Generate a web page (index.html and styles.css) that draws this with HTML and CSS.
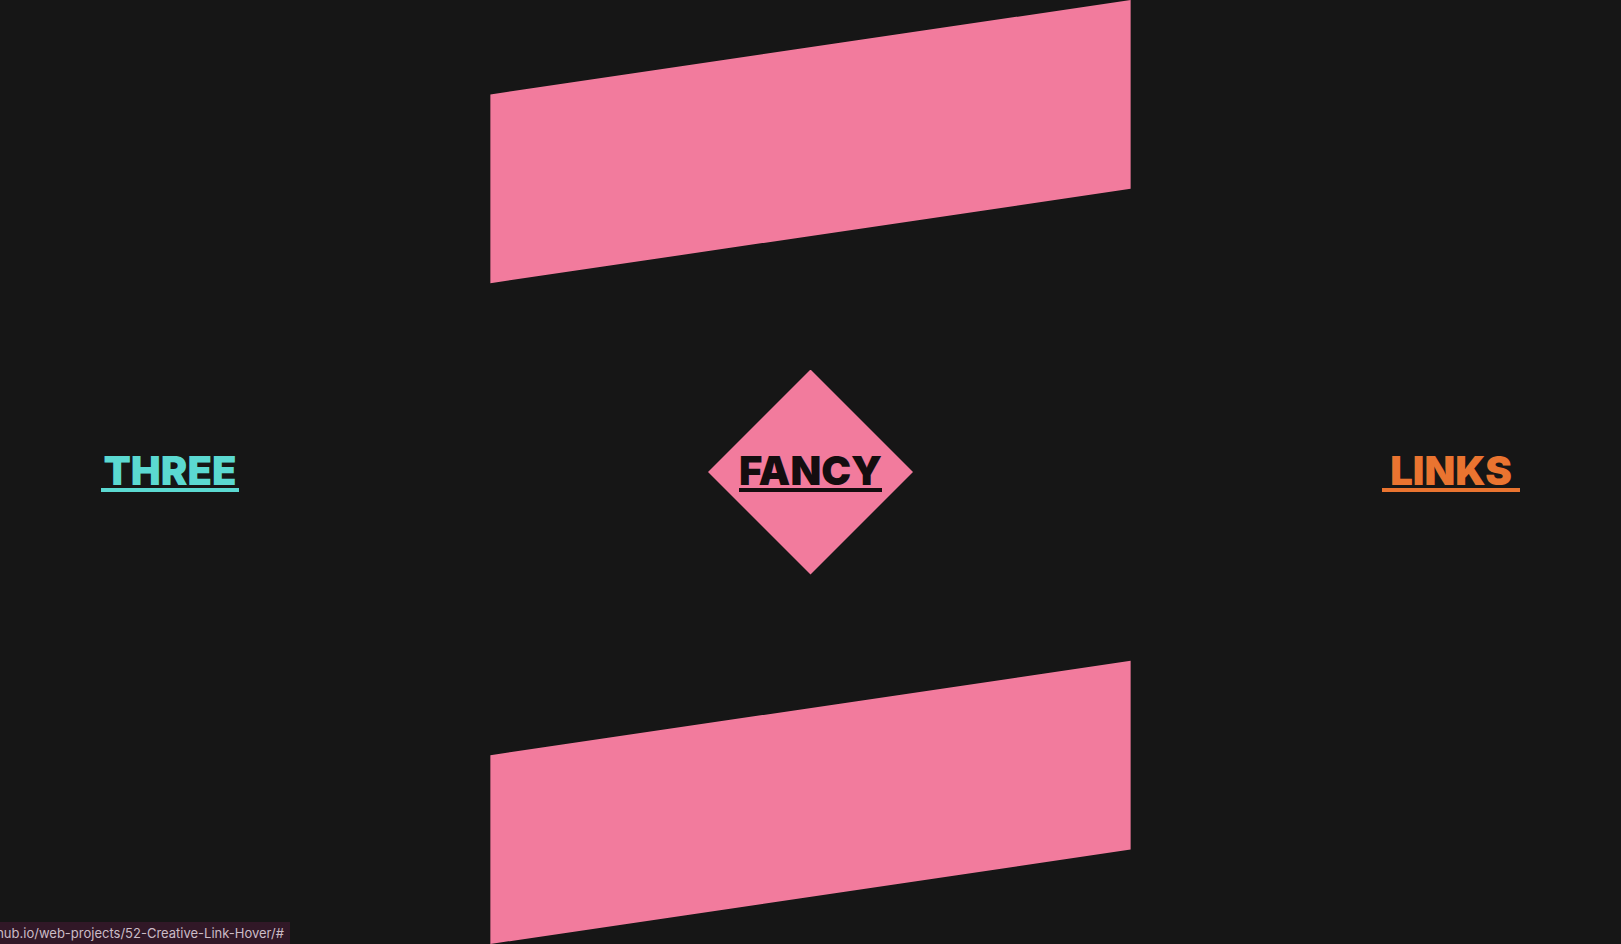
FILE: index.html
```html
<!DOCTYPE html>
<html lang="en">
<head>
  <meta charset="UTF-8" />
  <meta name="viewport" content="width=device-width, initial-scale=1.0" />
  <title>Creative Link Hover</title>
  <link rel="stylesheet" href="styles.css">
</head>
<body>
  <nav class="links">
    <a class="link three" href="#"><span class="label">THREE</span></a>
    <div class="stage">
      <a class="link fancy" href="#"><span class="label">FANCY</span></a>
    </div>
    <a class="link last" href="#"><span class="label">LINKS</span></a>
  </nav>

  <div class="status"><span>hub.io/web-projects/52-Creative-Link-Hover/#</span></div>
</body>
</html>
```
FILE: styles.css
```css
* {
  box-sizing: border-box;
  margin: 0;
  padding: 0;
}

body {
  min-height: 100vh;
  background-color: #161616;
  font-family: Inter, sans-serif;
  overflow: hidden;
}

.links {
  display: grid;
  grid-template-columns: 1fr 39.5% 1fr;
  align-items: center;
  min-height: 100vh;
}

.link {
  font-size: 40px;
  font-weight: 900;
  line-height: 34px;
  text-decoration: none;
}

.label {
  display: block;
  min-width: 138px;
  padding-top: 2px;
  border-bottom: 4px solid currentColor;
  text-align: center;
}

.three {
  justify-self: start;
  margin-left: 101px;
  color: #5bd9d1;
}

.last {
  justify-self: end;
  margin-right: 101px;
  color: #ea7430;
}

.stage {
  position: relative;
  display: flex;
  align-items: center;
  justify-content: center;
  align-self: stretch;
}

/* slanted bands above and below the link */
.stage::before {
  content: "";
  position: absolute;
  inset: 0;
  background-color: #f27b9d;
  clip-path: polygon(0 10%, 100% 0, 100% 20%, 0 30%, 0 80%, 100% 70%, 100% 90%, 0 100%);
}

/* diamond behind the link */
.fancy {
  display: grid;
  place-items: center;
  width: 205px;
  height: 205px;
  background-color: #f27b9d;
  clip-path: polygon(50% 0, 100% 50%, 50% 100%, 0 50%);
  color: #140d0f;
}

.status {
  position: fixed;
  left: 0;
  bottom: 0;
  display: flex;
  justify-content: flex-end;
  width: 290px;
  height: 22px;
  padding-right: 6px;
  overflow: hidden;
  background-color: #311827;
  color: #cbbcc6;
  font-size: 13px;
  line-height: 22px;
  white-space: nowrap;
}
```
